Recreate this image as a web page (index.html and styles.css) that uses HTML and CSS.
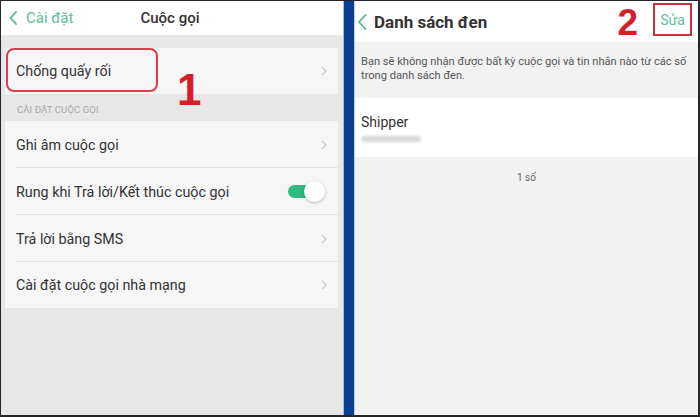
FILE: index.html
```html
<!DOCTYPE html>
<html lang="vi">
<head>
<meta charset="utf-8">
<link rel="stylesheet" href="styles.css">
</head>
<body>
<div class="frame">
  <section class="panel left">
    <header class="lhead">
      <div class="back">
        <svg class="back-ic" width="8" height="14" viewBox="0 0 8 14"><polyline points="7,1 1.5,7 7,13" fill="none" stroke="#4cb990" stroke-width="1.8" stroke-linecap="round" stroke-linejoin="round"/></svg>
        <span>Cài đặt</span>
      </div>
      <div class="ltitle">Cuộc gọi</div>
    </header>
    <div class="group first">
      <div class="row">
        <span class="label">Chống quấy rối</span>
        <svg class="chev" width="6" height="10" viewBox="0 0 6 10"><polyline points="1,1 5,5 1,9" fill="none" stroke="#c9c9c9" stroke-width="1.2"/></svg>
      </div>
      <div class="hl-box"></div>
      <div class="num num1">1</div>
    </div>
    <div class="section">CÀI ĐẶT CUỘC GỌI</div>
    <div class="group">
      <div class="row div">
        <span class="label">Ghi âm cuộc gọi</span>
        <svg class="chev" width="6" height="10" viewBox="0 0 6 10"><polyline points="1,1 5,5 1,9" fill="none" stroke="#c9c9c9" stroke-width="1.2"/></svg>
      </div>
      <div class="row div">
        <span class="label">Rung khi Trả lời/Kết thúc cuộc gọi</span>
        <span class="toggle"><span class="knob"></span></span>
      </div>
      <div class="row div">
        <span class="label">Trả lời bằng SMS</span>
        <svg class="chev" width="6" height="10" viewBox="0 0 6 10"><polyline points="1,1 5,5 1,9" fill="none" stroke="#c9c9c9" stroke-width="1.2"/></svg>
      </div>
      <div class="row">
        <span class="label">Cài đặt cuộc gọi nhà mạng</span>
        <svg class="chev" width="6" height="10" viewBox="0 0 6 10"><polyline points="1,1 5,5 1,9" fill="none" stroke="#c9c9c9" stroke-width="1.2"/></svg>
      </div>
    </div>
  </section>
  <div class="divider"></div>
  <section class="panel right">
    <header class="rhead">
      <svg class="back-ic2" width="10" height="16" viewBox="0 0 10 16"><polyline points="8.5,1 2,8 8.5,15" fill="none" stroke="#4cb990" stroke-width="1.8" stroke-linecap="round" stroke-linejoin="round"/></svg>
      <span class="rtitle">Danh sách đen</span>
      <span class="spacer"></span>
      <span class="num num2">2</span>
      <span class="edit">Sửa</span>
    </header>
    <p class="desc">Bạn sẽ không nhận được bất kỳ cuộc gọi và tin nhắn nào từ các số<br>trong danh sách đen.</p>
    <div class="contact">
      <div class="cname">Shipper</div>
      <div class="cnum"></div>
    </div>
    <div class="count">1 số</div>
  </section>
</div>
</body>
</html>
```

FILE: styles.css
```css
* { box-sizing: border-box; }
html, body { margin: 0; padding: 0; }
body {
  width: 700px;
  height: 417px;
  background: #262626;
  font-family: Roboto, "Noto Sans", "Liberation Sans", sans-serif;
  overflow: hidden;
}
.frame {
  display: flex;
  height: 417px;
  padding: 1px 3px 2px 1px;
}
.panel { position: relative; height: 100%; flex-shrink: 0; overflow: hidden; }
.left {
  width: 342px;
  background: #e7e7e7;
  padding-right: 5px;
  display: flex;
  flex-direction: column;
}
.lhead {
  height: 34px;
  flex-shrink: 0;
  background: #fff;
  margin-right: -5px;
  display: flex;
  align-items: center;
  position: relative;
}
.back {
  display: flex;
  align-items: center;
  gap: 9px;
  padding-left: 8px;
  color: #5dbf9b;
  font-size: 15px;
}
.ltitle {
  position: absolute;
  left: 0; right: 0;
  text-align: center;
  font-size: 15px;
  font-weight: 500;
  color: #333;
  pointer-events: none;
  padding-right: 4px;
}
.group {
  background: #f6f6f6;
  margin-left: 4px;
  position: relative;
}
.group.first { margin-top: 13px; }
.row {
  height: 46px;
  display: flex;
  align-items: center;
  justify-content: space-between;
  padding: 0 11px 0 11px;
  position: relative;
}
.row.div::after {
  content: "";
  position: absolute;
  left: 11px; right: 0; bottom: 0;
  height: 1px;
  background: #e4e4e4;
}
.row.div { height: 47px; }
.label {
  font-size: 14.3px;
  color: #333;
}
.chev { display: block; }
.section {
  height: 27px;
  flex-shrink: 0;
  padding: 10px 0 0 16px;
  font-size: 9.5px;
  color: #a9a9a9;
  letter-spacing: 0.1px;
}
.toggle {
  width: 34px;
  height: 13px;
  background: #2fba7f;
  border-radius: 7px;
  position: relative;
  margin-right: 5px;
}
.knob {
  position: absolute;
  width: 21px;
  height: 21px;
  border-radius: 50%;
  background: #fff;
  right: -3px;
  top: -4px;
  box-shadow: 0 1px 3px rgba(0,0,0,0.25);
}
.hl-box {
  position: absolute;
  left: 1px;
  top: 0;
  width: 152px;
  height: 44px;
  border: 2px solid #d8414c;
  border-radius: 8px;
}
.num {
  font-family: "Liberation Sans", Arial, sans-serif;
  font-weight: 700;
  color: #d41f2a;
  line-height: 1;
}
.num1 {
  position: absolute;
  left: 172px;
  top: 20px;
  font-size: 44px;
}
.divider {
  width: 12px;
  flex-shrink: 0;
  background: #0a3f93;
  border-left: 1px solid #9fbde6;
  border-right: 1px solid #b9cfee;
}
.right {
  width: 343px;
  background: #f2f2f2;
}
.rhead {
  height: 41px;
  background: #fff;
  display: flex;
  align-items: center;
  padding-left: 2px;
  position: relative;
}
.rtitle {
  margin-left: 7px;
  font-size: 17px;
  font-weight: 700;
  color: #333;
}
.spacer { flex: 1; }
.num2 {
  font-size: 37px;
  margin-right: 15px;
  margin-top: 1px;
}
.edit {
  width: 39px;
  height: 33px;
  border: 2px solid #c8323d;
  color: #5dbf9b;
  font-size: 14px;
  display: flex;
  align-items: center;
  justify-content: center;
  margin-right: 6px;
  align-self: flex-start;
  margin-top: 2px;
}
.desc {
  margin: 0;
  padding: 13px 0 0 6px;
  height: 56px;
  font-size: 11.1px;
  line-height: 14px;
  color: #555;
  white-space: nowrap;
}
.contact {
  background: #fff;
  height: 59px;
  padding: 16px 6px 0 6px;
}
.cname {
  font-size: 14px;
  color: #333;
  line-height: 16px;
}
.cnum {
  width: 60px;
  height: 6px;
  margin-top: 6px;
  border-radius: 3px;
  background: #d6d6d6;
  filter: blur(1.5px);
}
.count {
  text-align: center;
  font-size: 10px;
  color: #666;
  margin-top: 15px;
}
```
